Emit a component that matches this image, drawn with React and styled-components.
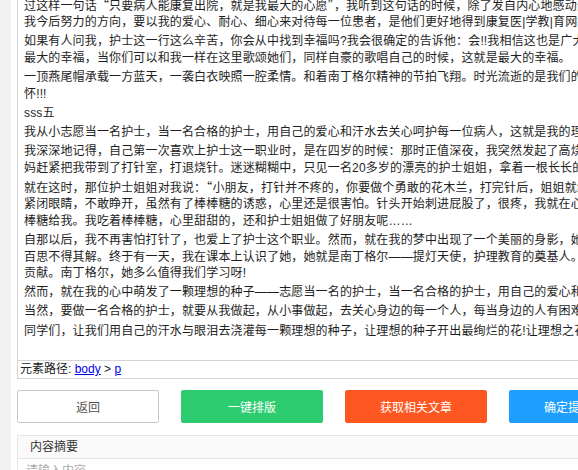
import React, { Fragment } from 'react'
import styled, { createGlobalStyle } from 'styled-components'

const GlobalStyle = createGlobalStyle`
  html, body {
    margin: 0;
    padding: 0;
    background: #f2f2f2;
    overflow: hidden;
  }
  body {
    font-family: "Liberation Sans", "Noto Sans CJK SC", sans-serif;
    color: #222;
  }
`

const Page = styled.div`
  padding-left: 11px;
  width: 660px;
`

const Panel = styled.div`
  background: #fff;
  padding: 0 6px;
  min-height: 100vh;
`

const Editor = styled.div`
  border: 1px solid #d4d4d4;
  border-top: none;
`

const EditorBody = styled.div`
  height: 360px;
  overflow: hidden;
  padding: 0 6px;
`

const Content = styled.div`
  margin-top: -6px;
  white-space: nowrap;
  font-family: "Liberation Sans", "Noto Sans CJK SC", sans-serif;
  font-size: 12px;
  line-height: 16.5px;
  letter-spacing: 0.15px;
  color: #1e1e1e;

  p {
    margin: 2.7px 0;
  }
`

// full width quotes, as the editor font draws them
const Quote = styled.span`
  font-family: "Noto Sans CJK SC", sans-serif;
  font-feature-settings: "fwid" 1;
`

const PathBar = styled.div`
  border-top: 1px solid #d4d4d4;
  height: 17px;
  line-height: 17px;
  padding-left: 2px;
  font-size: 12px;
  color: #222;

  a {
    color: #0000ee;
    text-decoration: underline;
  }
`

const ButtonRow = styled.div`
  display: grid;
  grid-template-columns: repeat(4, 142px);
  column-gap: 22px;
  margin: 11px 0 12px;
`

const Button = styled.button`
  height: 33px;
  border-radius: 2px;
  border: 1px solid ${p => (p.$bg ? p.$bg : '#c9c9c9')};
  background: ${p => p.$bg || '#fff'};
  color: ${p => (p.$bg ? '#fff' : '#555')};
  font-family: "Liberation Sans", "Noto Sans CJK SC", sans-serif;
  font-size: 12px;
  padding: 0;
  cursor: pointer;
`

const Summary = styled.div`
  border: 1px solid #e6e6e6;
`

const SummaryHeader = styled.div`
  height: 22px;
  line-height: 22px;
  padding: 0 12px;
  background: #fafafa;
  border-bottom: 1px solid #e6e6e6;
  font-size: 12px;
  color: #333;
`

const SummaryInput = styled.textarea`
  display: block;
  width: 100%;
  box-sizing: border-box;
  height: 80px;
  border: none;
  resize: none;
  padding: 4px 8px;
  font-family: "Liberation Sans", "Noto Sans CJK SC", sans-serif;
  font-size: 12px;
  line-height: 16px;

  &::placeholder {
    color: #aaa;
  }
`

const paragraphs = [
  [
    '过这样一句话“只要病人能康复出院，就是我最大的心愿”，我听到这句话的时候，除了发自内心地感动外，',
    '我今后努力的方向，要以我的爱心、耐心、细心来对待每一位患者，是他们更好地得到康复医|学教|育网搜集',
  ],
  [
    '如果有人问我，护士这一行这么辛苦，你会从中找到幸福吗?我会很确定的告诉他：会!!我相信这也是广大护士',
    '最大的幸福，当你们可以和我一样在这里歌颂她们，同样自豪的歌唱自己的时候，这就是最大的幸福。',
  ],
  [
    '一顶燕尾帽承载一方蓝天，一袭白衣映照一腔柔情。和着南丁格尔精神的节拍飞翔。时光流逝的是我们的青春，',
    '怀!!!',
  ],
  ['sss五'],
  ['我从小志愿当一名护士，当一名合格的护士，用自己的爱心和汗水去关心呵护每一位病人，这就是我的理想。'],
  [
    '我深深地记得，自己第一次喜欢上护士这一职业时，是在四岁的时候：那时正值深夜，我突然发起了高烧，妈',
    '妈赶紧把我带到了打针室，打退烧针。迷迷糊糊中，只见一名20多岁的漂亮的护士姐姐，拿着一根长长的针。',
  ],
  [
    '就在这时，那位护士姐姐对我说：“小朋友，打针并不疼的，你要做个勇敢的花木兰，打完针后，姐姐就给你',
    '紧闭眼睛，不敢睁开，虽然有了棒棒糖的诱惑，心里还是很害怕。针头开始刺进屁股了，很疼，我就在心里默',
    '棒糖给我。我吃着棒棒糖，心里甜甜的，还和护士姐姐做了好朋友呢……',
  ],
  [
    '自那以后，我不再害怕打针了，也爱上了护士这个职业。然而，就在我的梦中出现了一个美丽的身影，她是谁',
    '百思不得其解。终于有一天，我在课本上认识了她，她就是南丁格尔——提灯天使，护理教育的奠基人。她',
    '贡献。南丁格尔，她多么值得我们学习呀!',
  ],
  ['然而，就在我的心中萌发了一颗理想的种子——志愿当一名的护士，当一名合格的护士，用自己的爱心和汗水'],
  ['当然，要做一名合格的护士，就要从我做起，从小事做起，去关心身边的每一个人，每当身边的人有困难时'],
  ['同学们，让我们用自己的汗水与眼泪去浇灌每一颗理想的种子，让理想的种子开出最绚烂的花!让理想之花'],
]

const buttons = [
  { label: '返回' },
  { label: '一键排版', bg: '#2ecc71' },
  { label: '获取相关文章', bg: '#ff5722' },
  { label: '确定提交文章', bg: '#1e9fff' },
]

function Line({ text }) {
  return text.split(/([“”])/).map((part, i) =>
    part === '“' || part === '”' ? <Quote key={i}>{part}</Quote> : part
  )
}

export default function App() {
  return (
    <Fragment>
      <GlobalStyle />
      <Page>
        <Panel>
          <Editor>
            <EditorBody>
              <Content>
                {paragraphs.map((lines, i) => (
                  <p key={i}>
                    {lines.map((line, j) => (
                      <Fragment key={j}>
                        {j > 0 && <br />}
                        <Line text={line} />
                      </Fragment>
                    ))}
                  </p>
                ))}
              </Content>
            </EditorBody>
            <PathBar>
              元素路径: <a href="#body">body</a> &gt; <a href="#p">p</a>
            </PathBar>
          </Editor>
          <ButtonRow>
            {buttons.map(b => (
              <Button key={b.label} $bg={b.bg}>
                {b.label}
              </Button>
            ))}
          </ButtonRow>
          <Summary>
            <SummaryHeader>内容摘要</SummaryHeader>
            <SummaryInput placeholder="请输入内容" />
          </Summary>
        </Panel>
      </Page>
    </Fragment>
  )
}
